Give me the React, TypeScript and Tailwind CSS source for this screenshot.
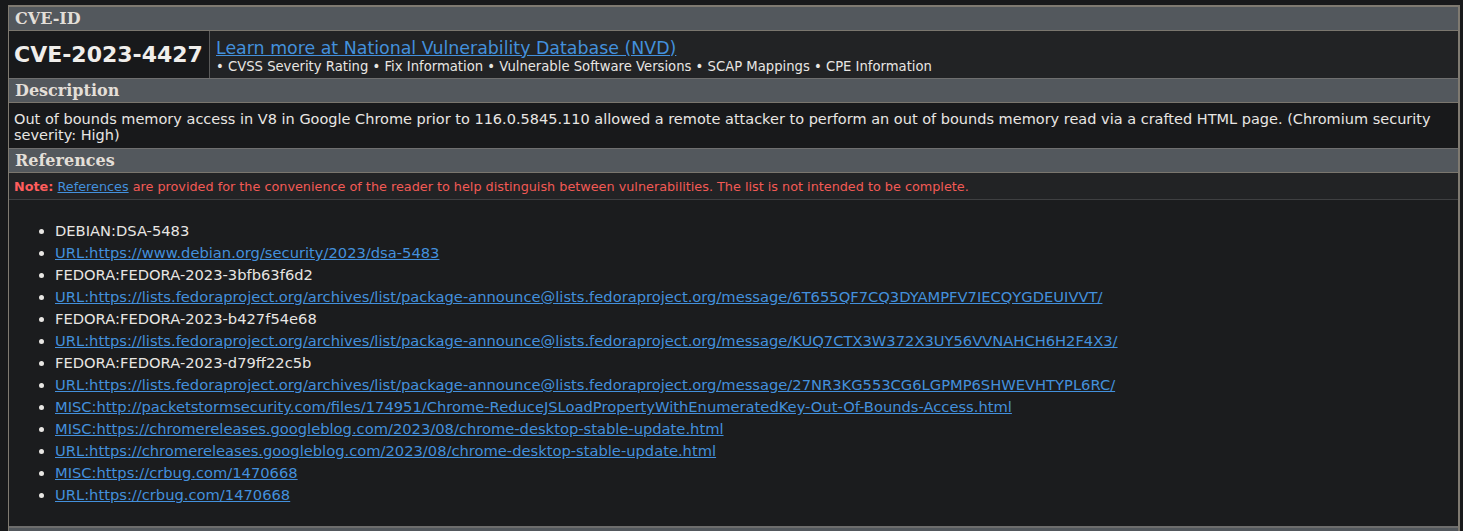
const refs: { text: string; link: boolean }[] = [
  { text: "DEBIAN:DSA-5483", link: false },
  { text: "URL:https://www.debian.org/security/2023/dsa-5483", link: true },
  { text: "FEDORA:FEDORA-2023-3bfb63f6d2", link: false },
  {
    text: "URL:https://lists.fedoraproject.org/archives/list/package-announce@lists.fedoraproject.org/message/6T655QF7CQ3DYAMPFV7IECQYGDEUIVVT/",
    link: true,
  },
  { text: "FEDORA:FEDORA-2023-b427f54e68", link: false },
  {
    text: "URL:https://lists.fedoraproject.org/archives/list/package-announce@lists.fedoraproject.org/message/KUQ7CTX3W372X3UY56VVNAHCH6H2F4X3/",
    link: true,
  },
  { text: "FEDORA:FEDORA-2023-d79ff22c5b", link: false },
  {
    text: "URL:https://lists.fedoraproject.org/archives/list/package-announce@lists.fedoraproject.org/message/27NR3KG553CG6LGPMP6SHWEVHTYPL6RC/",
    link: true,
  },
  {
    text: "MISC:http://packetstormsecurity.com/files/174951/Chrome-ReduceJSLoadPropertyWithEnumeratedKey-Out-Of-Bounds-Access.html",
    link: true,
  },
  {
    text: "MISC:https://chromereleases.googleblog.com/2023/08/chrome-desktop-stable-update.html",
    link: true,
  },
  {
    text: "URL:https://chromereleases.googleblog.com/2023/08/chrome-desktop-stable-update.html",
    link: true,
  },
  { text: "MISC:https://crbug.com/1470668", link: true },
  { text: "URL:https://crbug.com/1470668", link: true },
];

const Heading = ({ children }: { children: string }) => (
  <div className="h-[24px] bg-[#53585d] px-[6px] text-[16px] font-bold leading-[24px] text-[#e3dfd8] font-['DejaVu_Serif',serif] border-b border-[#7a766e]">
    {children}
  </div>
);

export default function App() {
  return (
    <div className="h-[531px] overflow-hidden bg-[#18191b] pt-[5px] pl-2 pr-[3px] font-['DejaVu_Sans',Verdana,sans-serif] text-[#e8e6e3]">
      <div className="border-t-2 border-l border-r-2 border-[#7f7a71]">
        <Heading>CVE-ID</Heading>

        {/* id + nvd link */}
        <div className="flex h-[48px] border-b border-[#6f6f6f]">
          <div className="flex w-[200px] items-center bg-[#18191b] pl-[5px] text-[22px] font-bold text-[#f0eeeb]">
            CVE-2023-4427
          </div>
          <div className="flex flex-1 flex-col justify-center gap-[1px] border-l border-[#5a5a5a] bg-[#222325] pl-[6px] pt-[3px]">
            <a className="text-[17.4px] leading-[20px] text-[#4390dc] underline">
              Learn more at National Vulnerability Database (NVD)
            </a>
            <div className="text-[13.2px] leading-[16px] text-[#e8e6e3]">
              • CVSS Severity Rating • Fix Information • Vulnerable Software Versions • SCAP Mappings • CPE Information
            </div>
          </div>
        </div>

        <Heading>Description</Heading>
        <div className="h-[46px] border-b border-[#6f6f6f] bg-[#18191b] px-[5px] pt-[8px] text-[14.5px] leading-[16px]">
          Out of bounds memory access in V8 in Google Chrome prior to 116.0.5845.110 allowed a remote attacker to perform an out of bounds memory read via a crafted HTML page. (Chromium security severity: High)
        </div>

        <Heading>References</Heading>
        <div className="h-[27px] border-b border-[#3f4042] bg-[#222325] px-[5px] text-[12.8px] leading-[27px] text-[#f25a55]">
          <b className="text-[#ff5d5d]">Note:</b>{" "}
          <a className="text-[#4390dc] underline">References</a> are provided for the convenience of the reader to help distinguish between vulnerabilities. The list is not intended to be complete.
        </div>

        <div className="h-[326px] bg-[#1b1c1e] pt-[20px]">
          <ul className="list-disc pl-[46px] text-[14.7px] leading-[22px] marker:text-[#e8e6e3]">
            {refs.map((r) => (
              <li key={r.text}>
                {r.link ? (
                  <a className="text-[#4390dc] underline">{r.text}</a>
                ) : (
                  <span>{r.text}</span>
                )}
              </li>
            ))}
          </ul>
        </div>
        <div className="h-[10px] border-t-2 border-[#6d6d6d] bg-[#53585d]" />
      </div>
    </div>
  );
}
